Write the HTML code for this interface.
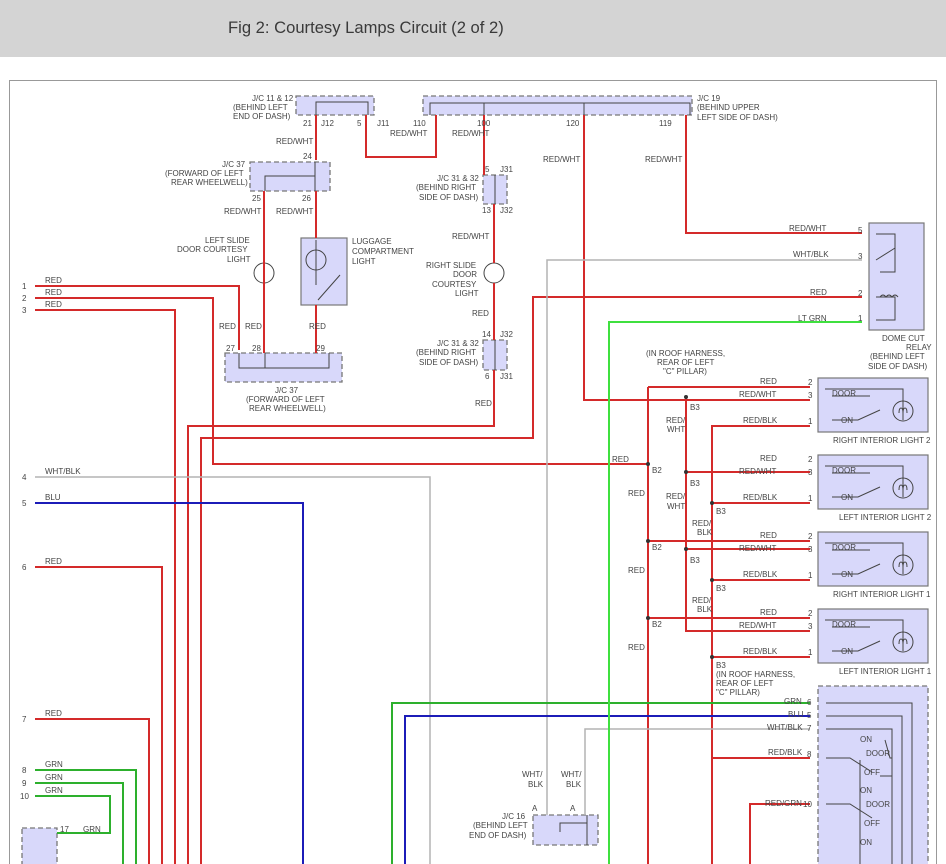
<!DOCTYPE html>
<html><head><meta charset="utf-8"><style>
html,body{margin:0;padding:0;background:#fff;width:946px;height:864px;overflow:hidden}
.hd{position:absolute;left:0;top:0;width:946px;height:57px;background:#d4d4d4}
.hd span{position:absolute;left:228px;top:18px;font:16.6px "Liberation Sans",sans-serif;color:#3a3a3a}
svg{position:absolute;left:0;top:0}
text{font-family:"Liberation Sans",sans-serif;font-size:8px;fill:#444}
.r{stroke:#d42a2a;stroke-width:2;fill:none}
.g{stroke:#2db02d;stroke-width:2;fill:none}
.lg{stroke:#3fe03f;stroke-width:2;fill:none}
.b{stroke:#1c1cb8;stroke-width:2;fill:none}
.w{stroke:#b4b4b4;stroke-width:1.5;fill:none}
.bx{fill:#d8d8fa;stroke:#777;stroke-width:1.3;stroke-dasharray:5,3}
.sb{fill:#d8d8fa;stroke:#777;stroke-width:1.2}
.in{stroke:#444;stroke-width:1;fill:none}
</style></head><body>
<div class="hd"><span>Fig 2: Courtesy Lamps Circuit (2 of 2)</span></div>
<svg width="946" height="864" viewBox="0 0 946 864">
<rect x="9.5" y="80.5" width="927" height="800" fill="none" stroke="#999" stroke-width="1"/>
<rect class="bx" x="296" y="96" width="78" height="19"/>
<rect class="bx" x="423" y="96" width="269" height="19"/>
<rect class="bx" x="250" y="162" width="80" height="29"/>
<rect class="bx" x="225" y="353" width="117" height="29"/>
<rect class="bx" x="483" y="175" width="24" height="29"/>
<rect class="bx" x="483" y="340" width="24" height="30"/>
<rect class="bx" x="533" y="815" width="65" height="30"/>
<rect class="bx" x="818" y="686" width="110" height="190"/>
<rect class="bx" x="22" y="828" width="35" height="40"/>
<rect class="sb" x="301" y="238" width="46" height="67"/>
<rect class="sb" x="869" y="223" width="55" height="107"/>
<rect class="sb" x="818" y="378" width="110" height="54"/>
<rect class="sb" x="818" y="455" width="110" height="54"/>
<rect class="sb" x="818" y="532" width="110" height="54"/>
<rect class="sb" x="818" y="609" width="110" height="54"/>
<path class="in" d="M316 115V102H368V115M265 191V176H315M315 162V191M239 353V368H329V353M265 353V368M495 175V204M495 340V370M430 115V103H690V115M484 103V115M584 103V115M560 832V823H587M587 815V845"/>
<path class="in" d="M825 389H903V420M832 396H870M832 420H858L880 410M825 466H903V497M832 473H870M832 497H858L880 487M825 543H903V574M832 550H870M832 574H858L880 564M825 620H903V651M832 627H870M832 651H858L880 641"/>
<circle class="in" cx="903" cy="411" r="10"/><circle class="in" cx="903" cy="488" r="10"/><circle class="in" cx="903" cy="565" r="10"/><circle class="in" cx="903" cy="642" r="10"/>
<path class="in" d="M899 413q0-5 2-5q2 0 2 5q0-5 2-5q2 0 2 5M899 490q0-5 2-5q2 0 2 5q0-5 2-5q2 0 2 5M899 567q0-5 2-5q2 0 2 5q0-5 2-5q2 0 2 5M899 644q0-5 2-5q2 0 2 5q0-5 2-5q2 0 2 5"/>
<path class="in" d="M876 234H895V272H880M876 260L895 248M876 297H895V320H876M880 297q3-4 6 0q3-4 6 0q3-4 6 0"/>
<path class="in" d="M316 240V285M318 300L340 275M826 703H912V870M826 716H902V870M826 729H892V870M826 758H850L872 772M826 804H850L872 818M885 740L890 758H892M880 776H892M860 760V870"/>
<circle class="in" cx="264" cy="273" r="10"/><circle class="in" cx="494" cy="273" r="10"/><circle class="in" cx="316" cy="260" r="10"/>
<path class="r" d="M35 286H239V350M35 298H213V464H648M35 310H175V870M35 567H162V870M35 719H149V870M264 191V353M316 115V160M316 191V238M264 283V353M316 305V353M366 115V157H436V115M484 115V175M494 204V263M494 283V340M494 370V426H188V870M201 870V438H533V297H862M584 115V400H810M686 115V233H862M648 387H810M648 387V870M648 541H810M648 618H810M686 397V631H810M686 472H810M686 549H810M712 870V426H810M712 503H810M712 580H810M712 657H810M712 758H810M750 870V804H810"/>
<path class="w" d="M35 477H430V870M862 260H547V815M810 729H585V815"/>
<path class="b" d="M35 503H303V870M810 716H405V870"/>
<path class="g" d="M35 770H136V870M35 783H123V870M35 796H110V833H57M810 703H392V870"/>
<path class="lg" d="M862 322H609V870"/>
<g fill="#333"><circle cx="648" cy="464" r="2"/><circle cx="648" cy="541" r="2"/><circle cx="648" cy="618" r="2"/><circle cx="686" cy="397" r="2"/><circle cx="686" cy="472" r="2"/><circle cx="686" cy="549" r="2"/><circle cx="712" cy="503" r="2"/><circle cx="712" cy="580" r="2"/><circle cx="712" cy="657" r="2"/></g>
<text x="22" y="289">1</text><text x="22" y="301">2</text><text x="22" y="313">3</text><text x="22" y="480">4</text><text x="22" y="506">5</text><text x="22" y="570">6</text><text x="22" y="722">7</text><text x="22" y="773">8</text><text x="22" y="786">9</text><text x="20" y="799">10</text>
<text x="45" y="283">RED</text><text x="45" y="295">RED</text><text x="45" y="307">RED</text><text x="45" y="474">WHT/BLK</text><text x="45" y="500">BLU</text><text x="45" y="564">RED</text><text x="45" y="716">RED</text><text x="45" y="767">GRN</text><text x="45" y="780">GRN</text><text x="45" y="793">GRN</text><text x="83" y="832">GRN</text><text x="60" y="832">17</text>
<text x="252" y="101">J/C 11 &amp; 12</text><text x="233" y="110">(BEHIND LEFT</text><text x="233" y="119">END OF DASH)</text>
<text x="303" y="126">21</text><text x="321" y="126">J12</text><text x="357" y="126">5</text><text x="377" y="126">J11</text><text x="390" y="136">RED/WHT</text>
<text x="276" y="144">RED/WHT</text><text x="303" y="159">24</text>
<text x="222" y="167">J/C 37</text><text x="165" y="176">(FORWARD OF LEFT</text><text x="171" y="185">REAR WHEELWELL)</text>
<text x="252" y="201">25</text><text x="302" y="201">26</text><text x="224" y="214">RED/WHT</text><text x="276" y="214">RED/WHT</text>
<text x="205" y="243">LEFT SLIDE</text><text x="177" y="252">DOOR COURTESY</text><text x="227" y="262">LIGHT</text><text x="352" y="244">LUGGAGE</text><text x="352" y="254">COMPARTMENT</text><text x="352" y="264">LIGHT</text>
<text x="219" y="329">RED</text><text x="245" y="329">RED</text><text x="309" y="329">RED</text>
<text x="226" y="351">27</text><text x="252" y="351">28</text><text x="316" y="351">29</text>
<text x="275" y="393">J/C 37</text><text x="246" y="402">(FORWARD OF LEFT</text><text x="249" y="411">REAR WHEELWELL)</text>
<text x="413" y="126">110</text><text x="477" y="126">100</text><text x="566" y="126">120</text><text x="659" y="126">119</text>
<text x="697" y="101">J/C 19</text><text x="697" y="110">(BEHIND UPPER</text><text x="697" y="120">LEFT SIDE OF DASH)</text>
<text x="452" y="136">RED/WHT</text><text x="543" y="162">RED/WHT</text><text x="645" y="162">RED/WHT</text>
<text x="485" y="172">5</text><text x="500" y="172">J31</text><text x="437" y="181">J/C 31 &amp; 32</text><text x="416" y="190">(BEHIND RIGHT</text><text x="419" y="200">SIDE OF DASH)</text><text x="482" y="213">13</text><text x="500" y="213">J32</text>
<text x="452" y="239">RED/WHT</text><text x="426" y="268">RIGHT SLIDE</text><text x="453" y="277">DOOR</text><text x="432" y="287">COURTESY</text><text x="455" y="296">LIGHT</text>
<text x="472" y="316">RED</text><text x="482" y="337">14</text><text x="500" y="337">J32</text><text x="437" y="346">J/C 31 &amp; 32</text><text x="416" y="355">(BEHIND RIGHT</text><text x="419" y="365">SIDE OF DASH)</text><text x="485" y="379">6</text><text x="500" y="379">J31</text><text x="475" y="406">RED</text>
<text x="789" y="231">RED/WHT</text><text x="858" y="233">5</text><text x="793" y="257">WHT/BLK</text><text x="858" y="259">3</text><text x="810" y="295">RED</text><text x="858" y="296">2</text><text x="798" y="321">LT GRN</text><text x="858" y="321">1</text>
<text x="882" y="341">DOME CUT</text><text x="906" y="350">RELAY</text><text x="870" y="359">(BEHIND LEFT</text><text x="868" y="369">SIDE OF DASH)</text>
<text x="646" y="356">(IN ROOF HARNESS,</text><text x="657" y="365">REAR OF LEFT</text><text x="663" y="374">"C" PILLAR)</text>
<text x="760" y="384">RED</text><text x="739" y="397">RED/WHT</text><text x="743" y="423">RED/BLK</text><text x="690" y="410">B3</text><text x="666" y="423">RED/</text><text x="667" y="432">WHT</text>
<text x="612" y="462">RED</text><text x="652" y="473">B2</text><text x="760" y="461">RED</text><text x="739" y="474">RED/WHT</text><text x="743" y="500">RED/BLK</text><text x="690" y="486">B3</text><text x="628" y="496">RED</text><text x="666" y="499">RED/</text><text x="667" y="509">WHT</text><text x="716" y="514">B3</text><text x="692" y="526">RED/</text><text x="697" y="535">BLK</text>
<text x="652" y="550">B2</text><text x="760" y="538">RED</text><text x="739" y="551">RED/WHT</text><text x="743" y="577">RED/BLK</text><text x="690" y="563">B3</text><text x="628" y="573">RED</text><text x="716" y="591">B3</text><text x="692" y="603">RED/</text><text x="697" y="612">BLK</text>
<text x="652" y="627">B2</text><text x="760" y="615">RED</text><text x="739" y="628">RED/WHT</text><text x="743" y="654">RED/BLK</text><text x="628" y="650">RED</text><text x="716" y="668">B3</text><text x="716" y="677">(IN ROOF HARNESS,</text><text x="716" y="686">REAR OF LEFT</text><text x="716" y="695">"C" PILLAR)</text>
<g><text x="808" y="385">2</text><text x="808" y="398">3</text><text x="808" y="424">1</text><text x="832" y="396">DOOR</text><text x="841" y="423">ON</text><text x="833" y="443">RIGHT INTERIOR LIGHT 2</text>
<text x="808" y="462">2</text><text x="808" y="475">3</text><text x="808" y="501">1</text><text x="832" y="473">DOOR</text><text x="841" y="500">ON</text><text x="839" y="520">LEFT INTERIOR LIGHT 2</text>
<text x="808" y="539">2</text><text x="808" y="552">3</text><text x="808" y="578">1</text><text x="832" y="550">DOOR</text><text x="841" y="577">ON</text><text x="833" y="597">RIGHT INTERIOR LIGHT 1</text>
<text x="808" y="616">2</text><text x="808" y="629">3</text><text x="808" y="655">1</text><text x="832" y="627">DOOR</text><text x="841" y="654">ON</text><text x="839" y="674">LEFT INTERIOR LIGHT 1</text></g>
<text x="784" y="704">GRN</text><text x="807" y="705">6</text><text x="788" y="717">BLU</text><text x="807" y="718">5</text><text x="767" y="730">WHT/BLK</text><text x="807" y="731">7</text><text x="768" y="755">RED/BLK</text><text x="807" y="757">8</text><text x="765" y="806">RED/GRN</text><text x="803" y="807">10</text>
<text x="860" y="742">ON</text><text x="866" y="756">DOOR</text><text x="864" y="775">OFF</text><text x="860" y="793">ON</text><text x="866" y="807">DOOR</text><text x="864" y="826">OFF</text><text x="860" y="845">ON</text>
<text x="522" y="777">WHT/</text><text x="528" y="787">BLK</text><text x="561" y="777">WHT/</text><text x="566" y="787">BLK</text><text x="532" y="811">A</text><text x="570" y="811">A</text>
<text x="502" y="819">J/C 16</text><text x="473" y="828">(BEHIND LEFT</text><text x="469" y="838">END OF DASH)</text>
</svg>
</body></html>
